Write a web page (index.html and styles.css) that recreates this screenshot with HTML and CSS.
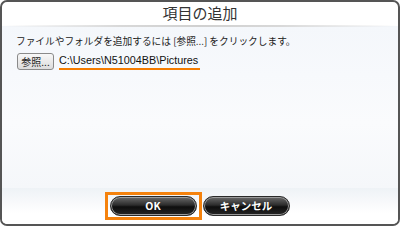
FILE: index.html
```html
<!DOCTYPE html>
<html lang="ja">
<head>
<meta charset="utf-8">
<link rel="stylesheet" href="styles.css">
</head>
<body>
<div class="dialog">
  <div class="title">項目の追加</div>
  <div class="main">
    <p class="hint">ファイルやフォルダを追加するには [参照...] をクリックします。</p>
    <div class="browse-row">
      <button class="browse">参照...</button>
      <span class="path">C:\Users\N51004BB\Pictures</span>
    </div>
  </div>
  <div class="footer">
    <div class="focus-box"><button class="pill ok">OK</button></div>
    <button class="pill">キャンセル</button>
  </div>
</div>
</body>
</html>
```
FILE: styles.css
```css
html, body {
  margin: 0;
  padding: 0;
  background: #ffffff;
}
.dialog {
  width: 400px;
  height: 226px;
  box-sizing: border-box;
  border: 2px solid #555555;
  border-radius: 7px;
  background: #ffffff;
  display: flex;
  flex-direction: column;
  font-family: "Noto Sans CJK JP", "Liberation Sans", sans-serif;
  color: #222;
  overflow: hidden;
}
.title {
  height: 24px;
  flex: none;
  text-align: center;
  font-size: 15px;
  line-height: 22px;
  color: #333;
  position: relative;
}
.title::after {
  content: "";
  position: absolute;
  left: 0;
  right: 0;
  bottom: -1px;
  height: 2px;
  background: linear-gradient(to right, rgba(200,200,200,0) 0%, #d8d8d8 30%, #d0d0d0 50%, #d8d8d8 70%, rgba(200,200,200,0) 100%);
}
.main {
  flex: 1;
  background: linear-gradient(#f4f7fb, #fafbfd 60%, #f5f7fa);
  padding: 7px 0 0 14px;
}
.hint {
  margin: 0;
  font-size: 9.7px;
  line-height: 16px;
  color: #222;
}
.browse-row {
  margin-top: 4px;
  display: flex;
  align-items: center;
  gap: 5px;
}
.browse {
  width: 37px;
  height: 17px;
  padding: 0;
  margin-left: 1px;
  border: 1px solid #8a8a8a;
  border-radius: 3px;
  background: linear-gradient(#f8f8f8, #dcdcdc);
  font-family: "Noto Sans CJK JP", sans-serif;
  font-size: 10px;
  line-height: 15px;
  color: #222;
}
.path {
  font-family: "Liberation Sans", sans-serif;
  font-size: 10.8px;
  line-height: 14px;
  color: #111;
  padding-bottom: 1px;
  border-bottom: 2px solid #f57c00;
  padding-right: 2px;
}
.footer {
  flex: none;
  height: 36px;
  display: flex;
  align-items: flex-start;
  justify-content: center;
  gap: 1px;
  padding: 4px 6px 0 0;
  background: linear-gradient(#eef2f6, #f8f9fb 40%, #ffffff 70%);
  box-sizing: border-box;
}
.focus-box {
  border: 3px solid #f5820d;
  padding: 1px 2px;
  display: flex;
}
.pill {
  width: 87px;
  height: 20px;
  padding: 0;
  border: 1px solid #2a2a2a;
  border-radius: 10px;
  box-shadow: inset 0 0 0 1px #9a9a9a;
  background: linear-gradient(#6a6a6a 0%, #2c2c2c 45%, #0e0e0e 55%, #262626 100%);
  color: #ffffff;
  font-family: "Noto Sans CJK JP", "Liberation Sans", sans-serif;
  font-weight: bold;
  font-size: 10.5px;
  line-height: 18px;
}
.footer > .pill {
  margin-top: 4px;
}
```
